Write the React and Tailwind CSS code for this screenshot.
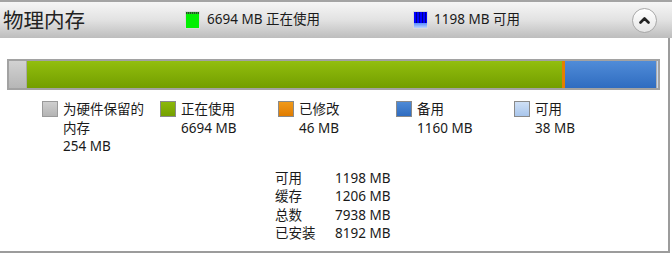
const font = { fontFamily: '"Noto Sans", "Noto Sans CJK SC", sans-serif' };

const legend = [
  { label: ['为硬件保留的', '内存'], value: '254 MB', sw: 'bg-gradient-to-b from-[#cfcfcf] to-[#b4b4b4] border-[#9a9a9a]' },
  { label: ['正在使用'], value: '6694 MB', sw: 'bg-gradient-to-b from-[#8cb80c] to-[#75a000] border-[#8a8a8a]' },
  { label: ['已修改'], value: '46 MB', sw: 'bg-gradient-to-b from-[#f09a1a] to-[#e07c00] border-[#8a8a8a]' },
  { label: ['备用'], value: '1160 MB', sw: 'bg-gradient-to-b from-[#4e8ad6] to-[#2f6cc0] border-[#8a8a8a]' },
  { label: ['可用'], value: '38 MB', sw: 'bg-gradient-to-b from-[#cfe0f6] to-[#a9c6ec] border-[#8a8a8a]' },
];

const stats = [
  ['可用', '1198 MB'],
  ['缓存', '1206 MB'],
  ['总数', '7938 MB'],
  ['已安装', '8192 MB'],
];

const App = () => {
  return (
    <div className="w-[672px] h-[255px] bg-white text-[#1a1a1a] overflow-hidden" style={font}>
      {/* header */}
      <div className="h-[38px] border-t-2 border-[#a4a4a4] bg-gradient-to-b from-[#f6f6f6] via-[#e2e2e2] to-[#bdbdbd] flex items-center">
        <div className="w-[185px] pl-[3px] text-[20.5px] leading-none text-[#222]">物理内存</div>
        <div className="w-[228px] flex items-center">
          <div className="w-[15px] h-[18px] border border-[#d8d8d8] bg-[#00f000] flex flex-col">
            <div className="h-[2px] bg-[repeating-linear-gradient(90deg,#1a5a1a_0_1px,#3a9a3a_1px_2px)]" />
          </div>
          <span className="ml-[7px] text-[13.5px] leading-none">6694 MB 正在使用</span>
        </div>
        <div className="flex-1 flex items-center">
          <div className="w-[15px] h-[18px] border border-[#d8d8d8] flex flex-col">
            <div className="h-[11px] bg-[#0000e8] bg-[repeating-linear-gradient(90deg,#0000ff_0_2px,#00008a_2px_3px)]" />
            <div className="flex-1 bg-gradient-to-b from-[#5a8cff] to-[#bcd4ff]" />
          </div>
          <span className="ml-[6px] text-[13.5px] leading-none">1198 MB 可用</span>
        </div>
        <div className="mr-[15px] w-[25px] h-[25px] rounded-full border border-[#a8a8a8] bg-gradient-to-b from-[#ffffff] to-[#e6e6e6] flex items-center justify-center shadow-[inset_0_1px_0_#fff]">
          <svg width="11" height="8" viewBox="0 0 11 8">
            <path d="M1.5 6.5 L5.5 2.5 L9.5 6.5" fill="none" stroke="#222" strokeWidth="2.6" strokeLinecap="round" strokeLinejoin="round" />
          </svg>
        </div>
      </div>

      {/* body */}
      <div className="w-[670px] h-[215px] border-r-2 border-b-2 border-[#9c9c9c] pt-[21px]">
        <div className="ml-[7px] w-[653px] h-[31px] border-2 border-[#a2a2a2] flex">
          <div className="w-[18px] bg-gradient-to-b from-[#d2d2d2] to-[#b6b6b6] border-r border-[#a8a8a8]" />
          <div className="w-[535px] bg-gradient-to-b from-[#92be0e] to-[#739e00]" />
          <div className="w-[3px] bg-[#e47f00]" />
          <div className="w-[91px] bg-gradient-to-b from-[#508cd8] to-[#2f6cc0]" />
          <div className="flex-1 bg-[#c9d9ef] border-l border-[#b0b0b0]" />
        </div>

        <div className="flex pl-[42px] mt-[10px]">
          {legend.map((item, i) => (
            <div key={i} className="w-[118px] flex items-start">
              <div className={`mt-[1px] w-[16px] h-[16px] border ${item.sw}`} />
              <div className="ml-[5px] text-[13.5px] leading-[18.5px]">
                {item.label.map((l, j) => (
                  <div key={j}>{l}</div>
                ))}
                <div>{item.value}</div>
              </div>
            </div>
          ))}
        </div>

        <div className="ml-[275px] mt-[13px] text-[13.5px] leading-[18.5px]">
          {stats.map(([k, v]) => (
            <div key={k} className="flex">
              <div className="w-[60px]">{k}</div>
              <div>{v}</div>
            </div>
          ))}
        </div>
      </div>
    </div>
  );
};

export default App;
